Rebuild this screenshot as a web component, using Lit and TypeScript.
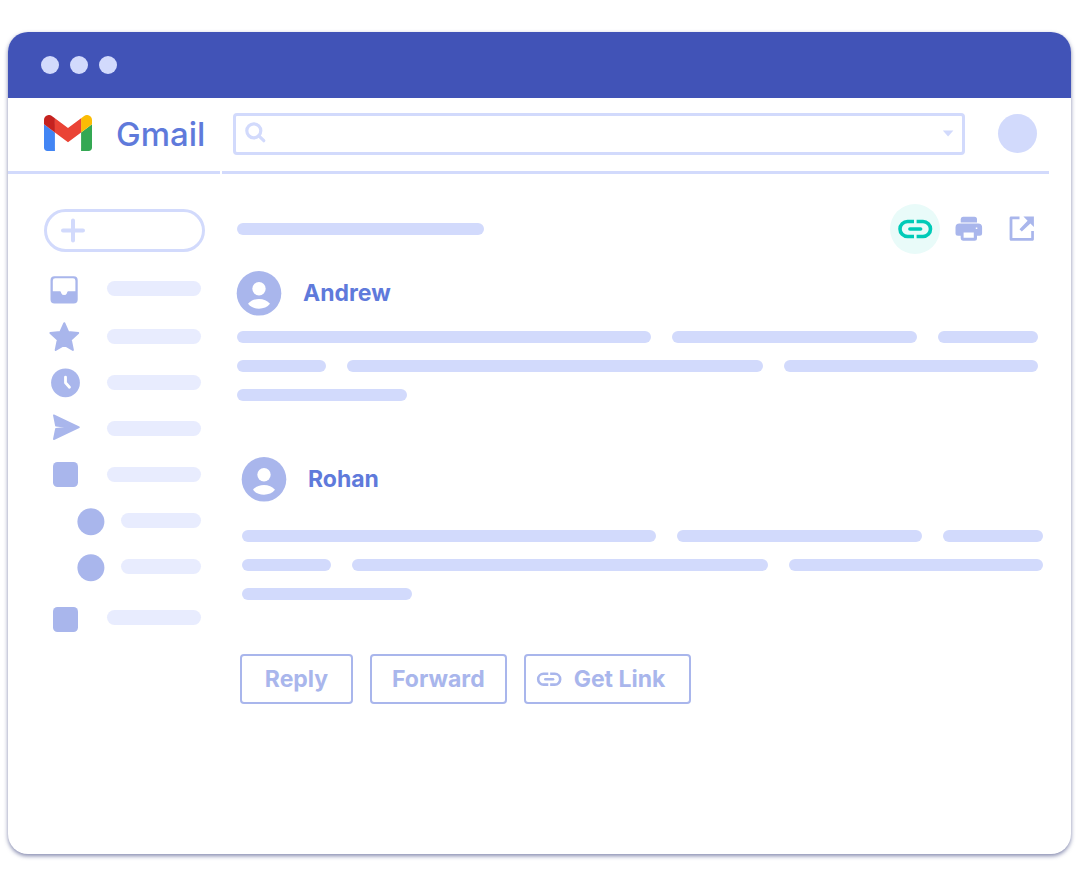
import { LitElement, html, svg, css } from "lit";
import { customElement, property } from "lit/decorators.js";

type Row = { icon: string; label: string; nested?: boolean; kind?: string };

const glyphs: Record<string, unknown> = {
  inbox: svg`<path fill-rule="evenodd" d="M5.5 3.2h19.2a4 4 0 0 1 4 4v19.2a4 4 0 0 1-4 4H5.5a4 4 0 0 1-4-4V7.200a4 4 0 0 1 4-4zM6.200 5.300a2.400 2.400 0 0 0-2.400 2.400V18.200h7.200c1 0 .9 1 1.300 2a3 3 0 0 0 5.600 0c.4-1 .3-2 1.300-2h7.200V7.700a2.400 2.400 0 0 0-2.400-2.400z"/>`,
  star: svg`<path stroke="currentColor" stroke-width="2" stroke-linejoin="round" d="M15.300 2.200l3.900 8.800 10 1-7.400 6.700 2.100 10.200-8.600-5-8.600 5 2.100-10.200L1.400 12l10-1z"/>`,
  clock: svg`<circle cx="16.500" cy="15.800" r="14.400"/><path d="M16.500 10.100v5.700l4 4.500" fill="none" stroke="#fff" stroke-width="2.800" stroke-linecap="round" stroke-linejoin="round"/>`,
  send: svg`<path stroke="currentColor" stroke-width="1.600" stroke-linejoin="round" d="M4.800 2.200L30 14.200 4.800 26.200l2.100-10.400 13-1.600-13-1.600z"/>`,
  square: svg`<rect x="4" y="3" width="25" height="25" rx="4.500"/>`,
  label: svg`<rect x="4" y="5" width="25" height="25" rx="4.500"/>`,
  dot: svg`<circle cx="15.900" cy="16.700" r="13.500"/>`,
};

@customElement("link-glyph")
class LinkGlyph extends LitElement {
  static styles = css`
    :host { display: block; }
    svg { display: block; width: 100%; height: auto; }
  `;
  render() {
    return html`<svg viewBox="0 0 36 20" fill="none" stroke="currentColor" stroke-width="3.600" aria-hidden="true">
      <path d="M17 2.500H10.500a7.500 7.500 0 0 0 0 15H17M19.600 2.500H26a7.500 7.500 0 0 1 0 15h-6.400" />
      <path d="M12.900 10h10.700" stroke-linecap="round" />
    </svg>`;
  }
}

@customElement("mail-message")
class MailMessage extends LitElement {
  @property() sender = "";
  @property({ attribute: false }) lines: number[][] = [];

  static styles = css`
    :host { display: block; }
    .head { display: flex; align-items: center; gap: 22px; }
    .face { width: 44px; height: 44px; display: block; color: #a9b6ec; overflow: visible; }
    .name { margin: 0; font-size: 23px; line-height: 30px; font-weight: 700; color: #5f7adb; }
    .body { display: grid; gap: 17px; margin-top: var(--body-gap, 16px); }
    .line { display: flex; gap: 21px; }
    .bar { height: 12px; border-radius: 6px; background: #d2dafc; flex-shrink: 1; flex-basis: 0; min-width: 0; }
    .rest { flex-basis: 0; }
  `;

  render() {
    return html`
      <article>
        <header class="head">
          <svg class="face" viewBox="0 0 44 44" aria-hidden="true">
            <circle cx="22" cy="22.300" r="22.300" fill="currentColor" />
            <circle cx="22" cy="17.800" r="6.700" fill="#fff" />
            <path d="M11 32.800c2.600-3.400 6.600-4.900 11-4.900s8.400 1.500 11 4.900c-2.600 3.300-6.600 4.900-11 4.900s-8.400-1.600-11-4.900z" fill="#fff" />
          </svg>
          <h2 class="name">${this.sender}</h2>
        </header>
        <div class="body">
          ${this.lines.map(
            (line) => html`<div class="line">
              ${line.map((part) =>
                part > 0
                  ? html`<span class="bar" style="flex-grow:${part}"></span>`
                  : html`<span class="rest" style="flex-grow:${-part}"></span>`
              )}
            </div>`
          )}
        </div>
      </article>
    `;
  }
}

@customElement("app-root")
class AppRoot extends LitElement {
  rows: Row[] = [
    { icon: "inbox", label: "Inbox", kind: "first" },
    { icon: "star", label: "Starred" },
    { icon: "clock", label: "Snoozed" },
    { icon: "send", label: "Sent" },
    { icon: "square", label: "Labels" },
    { icon: "dot", label: "Label one", nested: true },
    { icon: "dot", label: "Label two", nested: true },
    { icon: "label", label: "More", kind: "last" },
  ];

  lines = [[414, 245, 100], [89, 416, 254], [170, -610]];

  static styles = css`
    :host {
      display: flex;
      box-sizing: border-box;
      min-height: 100vh;
      padding: 32px 9px 26px 8px;
      background: #fff;
      font-family: "Inter", "Open Sans", sans-serif;
      color: #5f7adb;
    }
    * { box-sizing: border-box; }
    button { font: inherit; color: inherit; background: none; border: 0; padding: 0; cursor: pointer; }
    svg { display: block; }
    .window {
      flex: 1;
      display: flex;
      flex-direction: column;
      border-radius: 20px;
      overflow: hidden;
      background: #fff;
      box-shadow: 0 2px 4px rgba(50, 58, 120, 0.6);
    }
    .titlebar { display: flex; align-items: center; gap: 11px; height: 66px; padding-left: 33px; background: #4153b7; }
    .light { width: 18px; height: 18px; border-radius: 50%; background: #d2dafc; }
    .top { display: grid; grid-template-columns: 212px 1fr; column-gap: 2px; padding-right: 22px; }
    .brand, .tools { display: flex; align-items: center; height: 76px; border-bottom: 3px solid #d2dafc; }
    .brand { gap: 24px; padding-left: 36px; padding-bottom: 4px; }
    .logo { width: 48px; height: 36px; flex: none; }
    .wordmark { margin: 0; font-size: 33px; line-height: 36px; font-weight: 500; padding-top: 2px; }
    .tools { gap: 33px; padding: 0 12px 2px 11px; }
    .search { flex: 1; display: flex; align-items: center; height: 42px; padding: 0 8px 0 9px; border: 3px solid #d2dafc; border-radius: 4px; color: #d2dafc; }
    .search label { flex: none; padding-bottom: 2px; }
    .field { flex: 1; min-width: 0; height: 30px; padding: 0 8px; border: 0; outline: 0; background: none; font: 16px "Inter", sans-serif; color: #5f7adb; }
    .profile { width: 39px; height: 39px; border-radius: 50%; background: #d2dafc; }
    .columns { flex: 1; display: grid; grid-template-columns: 197px 1fr; column-gap: 32px; }
    .side { padding: 35px 0 0 36px; }
    .compose { display: flex; align-items: center; width: 100%; height: 43px; padding-left: 14px; border: 3px solid #d2dafc; border-radius: 22px; color: #d2dafc; }
    .folders { list-style: none; display: grid; gap: 1px; margin: 15px 0 0; padding: 0 4px 0 5px; }
    .folder { display: flex; align-items: center; gap: 27px; height: 45px; color: #a9b6ec; }
    .first { height: 43px; margin-bottom: 3px; }
    .last { margin-top: 5px; }
    .nested { padding-left: 26px; gap: 15px; }
    .glyph { width: 31px; height: 31px; flex: none; overflow: visible; }
    .caption { flex: 1; height: 15px; border-radius: 8px; background: #e8ecfe; }
    .main { padding: 30px 28px 32px 0; }
    .subject { display: flex; align-items: center; height: 50px; padding-right: 8px; }
    .title { width: 247px; height: 12px; border-radius: 6px; background: #d2dafc; margin-right: auto; }
    .linkbtn { display: grid; place-items: center; width: 50px; height: 50px; margin-right: 15px; border-radius: 50%; background: #e9fbf9; color: #00cbb8; }
    .linkbtn link-glyph { width: 36px; }
    .tool { color: #a9b6ec; }
    .open { margin-left: 26px; }
    .one { margin: 17px 5px 0 0; }
    .two { margin: 56px 0 0 5px; --body-gap: 29px; }
    .actions { display: flex; gap: 17px; margin: 54px 0 0 3px; }
    .action { display: flex; align-items: center; justify-content: center; gap: 12px; height: 50px; border: 2px solid #a9b6ec; border-radius: 4px; color: #a9b6ec; font-size: 23px; line-height: 30px; font-weight: 700; padding: 0 20px; min-width: 113px; }
    .withicon { padding: 0 24px 0 10px; }
    .withicon link-glyph { width: 26px; }
  `;

  render() {
    return html`
      <div class="window">
        <div class="titlebar"><span class="light"></span><span class="light"></span><span class="light"></span></div>
        <header class="top">
          <div class="brand">
            <svg class="logo" viewBox="52 42 88 66" aria-hidden="true">
              <path fill="#4285f4" d="M58 108h14V74L52 59v43c0 3.320 2.690 6 6 6" />
              <path fill="#34a853" d="M120 108h14c3.320 0 6-2.690 6-6V59l-20 15" />
              <path fill="#fbbc04" d="M120 48v26l20-15v-8c0-7.420-8.470-11.650-14.400-7.200" />
              <path fill="#ea4335" d="M72 74V48l24 18 24-18v26L96 92" />
              <path fill="#c5221f" d="M52 51v8l20 15V48l-5.600-4.200c-5.940-4.450-14.400-.220-14.400 7.200" />
            </svg>
            <h1 class="wordmark">Gmail</h1>
          </div>
          <div class="tools">
            <div class="search">
              <label for="query" aria-label="Search mail">
                <svg width="22" height="22" viewBox="0 0 22 22" fill="none" stroke="currentColor" stroke-width="3.200" stroke-linecap="round">
                  <circle cx="8.800" cy="8.800" r="7" /><path d="M13.800 13.800l5 4.900" />
                </svg>
              </label>
              <input class="field" id="query" type="search" />
              <button aria-label="Search options">
                <svg width="12" height="7" viewBox="0 0 12 7" fill="currentColor"><path d="M.8.500h10.600L6.100 6.500z" /></svg>
              </button>
            </div>
            <button class="profile" aria-label="Account"></button>
          </div>
        </header>
        <div class="columns">
          <nav class="side">
            <button class="compose" aria-label="Compose">
              <svg width="24" height="25" viewBox="0 0 24 25" stroke="currentColor" stroke-width="4" stroke-linecap="round"><path d="M12 2.500v20M2 12.500h20" /></svg>
            </button>
            <ul class="folders">
              ${this.rows.map(
                (row) => html`<li class="folder ${row.nested ? "nested" : ""} ${row.kind ?? ""}" aria-label=${row.label}>
                  <svg class="glyph" viewBox="0 0 31 31" fill="currentColor" aria-hidden="true">${glyphs[row.icon]}</svg>
                  <span class="caption"></span>
                </li>`
              )}
            </ul>
          </nav>
          <main class="main">
            <div class="subject">
              <span class="title"></span>
              <button class="linkbtn" aria-label="Get link"><link-glyph></link-glyph></button>
              <button class="tool" aria-label="Print">
                <svg width="28" height="26" viewBox="0 0 28 26" fill="currentColor">
                  <path d="M8 .8h11.500a2.500 2.500 0 0 1 2.500 2.500v3.200H5.700V3.300A2.500 2.500 0 0 1 8 .8z" />
                  <path fill-rule="evenodd" d="M4.500 7.500h18.600a4 4 0 0 1 4 4v5.700a2.500 2.500 0 0 1-2.500 2.500H22v2.600a2.500 2.500 0 0 1-2.500 2.500H8a2.500 2.500 0 0 1-2.300-2.500v-2.600H3a2.500 2.500 0 0 1-2.500-2.500v-5.700a4 4 0 0 1 4-4zM8.600 16.600v5.200h10.200v-5.200zM20.800 11.600v1.400h1.500v-1.400z" />
                </svg>
              </button>
              <button class="tool open" aria-label="Open in new window">
                <svg width="26" height="26" viewBox="0 0 26 26" fill="currentColor">
                  <path d="M10.500.5v2.700H3.400v18.900h18.800v-7h2.700v8.200c0 .9-.6 1.500-1.500 1.500H2.100c-.9 0-1.500-.6-1.500-1.500V2c0-.9.6-1.500 1.500-1.500z" />
                  <path d="M14.400.5h10.500V11l-3.500-3.500-8.600 8.100-2.300-2.300L18.600 4.700z" />
                </svg>
              </button>
            </div>
            <mail-message class="one" sender="Andrew" .lines=${this.lines}></mail-message>
            <mail-message class="two" sender="Rohan" .lines=${this.lines}></mail-message>
            <div class="actions">
              <button class="action">Reply</button>
              <button class="action">Forward</button>
              <button class="action withicon"><link-glyph></link-glyph>Get Link</button>
            </div>
          </main>
        </div>
      </div>
    `;
  }
}
